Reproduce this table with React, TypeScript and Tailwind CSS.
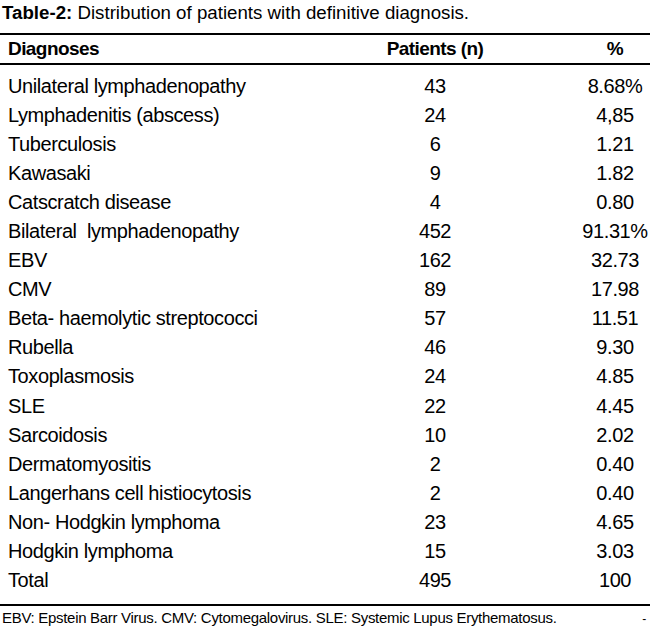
const rows: [string, string, string][] = [
  ["Unilateral lymphadenopathy", "43", "8.68%"],
  ["Lymphadenitis (abscess)", "24", "4,85"],
  ["Tuberculosis", "6", "1.21"],
  ["Kawasaki", "9", "1.82"],
  ["Catscratch disease", "4", "0.80"],
  ["Bilateral  lymphadenopathy", "452", "91.31%"],
  ["EBV", "162", "32.73"],
  ["CMV", "89", "17.98"],
  ["Beta- haemolytic streptococci", "57", "11.51"],
  ["Rubella", "46", "9.30"],
  ["Toxoplasmosis", "24", "4.85"],
  ["SLE", "22", "4.45"],
  ["Sarcoidosis", "10", "2.02"],
  ["Dermatomyositis", "2", "0.40"],
  ["Langerhans cell histiocytosis", "2", "0.40"],
  ["Non- Hodgkin lymphoma", "23", "4.65"],
  ["Hodgkin lymphoma", "15", "3.03"],
  ["Total", "495", "100"],
];

export default function App() {
  return (
    <div className="w-[650px] h-[634px] bg-white text-black overflow-hidden font-['Liberation_Sans',Arial,sans-serif]">
      {/* Caption */}
      <div className="h-[33px] pl-[2px] pt-[1px] text-[18.7px] leading-[24px] whitespace-nowrap">
        <span className="font-bold">Table-2:</span> Distribution of patients with definitive diagnosis.
      </div>

      {/* Table */}
      <div className="border-t-2 border-b-2 border-black">
        <div className="grid grid-cols-[340px_190px_120px] h-[30px] items-center text-[19px] tracking-[-0.03em] font-bold border-b-2 border-black">
          <div className="pl-[8px]">Diagnoses</div>
          <div className="text-center">Patients (n)</div>
          <div className="pl-[50px] text-center">%</div>
        </div>
        <div className="pt-[6px] pb-[9px]">
          {rows.map(([name, n, pct]) => (
            <div key={name} className="grid grid-cols-[340px_190px_120px] h-[29.1px] items-center text-[20px] tracking-[-0.02em] leading-none">
              <div className="pl-[8px] whitespace-pre">{name}</div>
              <div className="text-center">{n}</div>
              <div className="pl-[50px] text-center">{pct}</div>
            </div>
          ))}
        </div>
      </div>

      {/* Footnote */}
      <div className="flex justify-between items-center h-[26px] pl-[2px] pr-[4px] text-[15px] tracking-[-0.02em] whitespace-nowrap">
        <span>EBV: Epstein Barr Virus. CMV: Cytomegalovirus. SLE: Systemic Lupus Erythematosus.</span>
        <span className="text-[12px]">-</span>
      </div>
    </div>
  );
}
